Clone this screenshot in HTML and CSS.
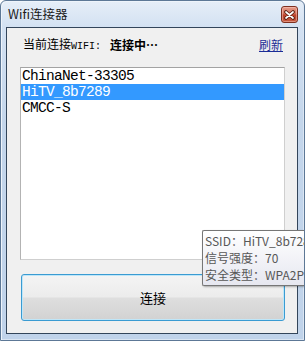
FILE: index.html
```html
<!DOCTYPE html>
<html lang="zh-CN">
<head>
<meta charset="utf-8">
<title>Wifi连接器</title>
<link rel="stylesheet" href="styles.css">
</head>
<body>
<div class="window">
  <div class="titlebar">
    <span class="title">Wifi连接器</span>
    <span class="close">
      <svg width="11" height="10" viewBox="0 0 11 10">
        <path d="M2 2 L9 8 M9 2 L2 8" stroke="#5a2012" stroke-width="3.6" stroke-linecap="round"/>
        <path d="M2 2 L9 8 M9 2 L2 8" stroke="#ffffff" stroke-width="1.7" stroke-linecap="round"/>
      </svg>
    </span>
  </div>
  <div class="client">
    <div class="status">
      <span class="label">当前连接<span class="mono">WIFI:</span></span>
      <span class="state">连接中…</span>
      <a class="refresh">刷新</a>
    </div>
    <ul class="listbox">
      <li>ChinaNet-33305</li>
      <li class="selected">HiTV_8b7289</li>
      <li>CMCC-S</li>
    </ul>
    <button class="connect">连接</button>
  </div>
  <div class="tooltip">
    <div>SSID：HiTV_8b7289</div>
    <div>信号强度：70</div>
    <div>安全类型：WPA2PSK</div>
  </div>
</div>
</body>
</html>
```

FILE: styles.css
```css
html, body {
  margin: 0;
  padding: 0;
}
body {
  width: 305px;
  height: 341px;
  overflow: hidden;
  font-family: "Noto Sans CJK SC", "Liberation Sans", sans-serif;
  background: #ffffff;
}
.window {
  position: relative;
  box-sizing: border-box;
  width: 305px;
  height: 341px;
  overflow: hidden;
  border: 1px solid #5d7896;
  border-radius: 6px 6px 0 0;
  background: linear-gradient(#e6eef8 0px, #d3e1f2 26px, #c4d6eb 120px, #c0d3ea 100%);
  box-shadow: inset 1px 1px 0 #eef4fb, inset -1px -1px 0 #dbe6f3;
  display: flex;
  flex-direction: column;
  padding: 0 6px 6px 5px;
}
.titlebar {
  height: 26px;
  display: flex;
  align-items: center;
  justify-content: space-between;
  padding-left: 2px;
}
.title {
  font-size: 12.5px;
  line-height: 16px;
  color: #1b1b1b;
  margin-top: -1px;
}
.close {
  box-sizing: border-box;
  width: 17px;
  height: 17px;
  margin-top: 1px;
  border: 1px solid #7e3020;
  border-radius: 3px;
  background: linear-gradient(#e79c8a 0%, #d57560 40%, #bd422b 55%, #c55a40 100%);
  box-shadow: inset 0 0 0 1px rgba(255, 210, 200, 0.45);
  display: flex;
  align-items: center;
  justify-content: center;
}
.close svg {
  display: block;
}
.client {
  flex: 1;
  border: 1px solid #33455a;
  background: #f0f0f0;
  display: flex;
  flex-direction: column;
}
.status {
  display: flex;
  align-items: center;
  height: 16px;
  margin: 9px 14px 0 16px;
  font-size: 12px;
  line-height: 16px;
  color: #000000;
}
.mono {
  font-family: "Liberation Mono", monospace;
  font-size: 10px;
}
.state {
  margin-left: 9px;
  font-weight: bold;
}
.refresh {
  margin-left: auto;
  color: #1b2d96;
  text-decoration: underline;
}
.listbox {
  box-sizing: border-box;
  height: 193px;
  margin: 14px 12px 0 13px;
  padding: 0;
  list-style: none;
  background: #ffffff;
  border: 1px solid;
  border-color: #a3a3a3 #cfcfcf #cfcfcf #b3b3b3;
  font-family: "Liberation Mono", monospace;
  font-size: 14.5px;
  letter-spacing: -0.7px;
}
.listbox li {
  height: 16px;
  line-height: 16px;
  padding-left: 1px;
  color: #000000;
  white-space: pre;
}
.listbox li.selected {
  background: #3399ff;
  color: #ffffff;
}
.connect {
  box-sizing: border-box;
  height: 47px;
  margin: 14px 12px 0 14px;
  padding: 0;
  border: 1px solid #3a9bd2;
  border-radius: 3px;
  background: linear-gradient(#f4f4f4 0%, #ececec 48%, #dedede 52%, #d2d2d2 100%);
  box-shadow: inset 0 0 0 1px #bfe6f8;
  font-family: "Noto Sans CJK SC", sans-serif;
  font-size: 13px;
  color: #000000;
}
.tooltip {
  position: absolute;
  left: 201px;
  top: 229px;
  box-sizing: border-box;
  width: 104px;
  height: 56px;
  padding: 1px 0 0 2px;
  overflow: hidden;
  border: 1px solid #767676;
  border-right: none;
  border-radius: 2px 0 0 2px;
  background: linear-gradient(#ffffff, #e6e7f0);
  box-shadow: 1px 1px 2px rgba(0, 0, 0, 0.3);
  font-family: "Noto Sans CJK JP", "Noto Sans CJK SC", sans-serif;
  font-size: 12px;
  line-height: 17px;
  color: #575757;
  white-space: nowrap;
}
```
